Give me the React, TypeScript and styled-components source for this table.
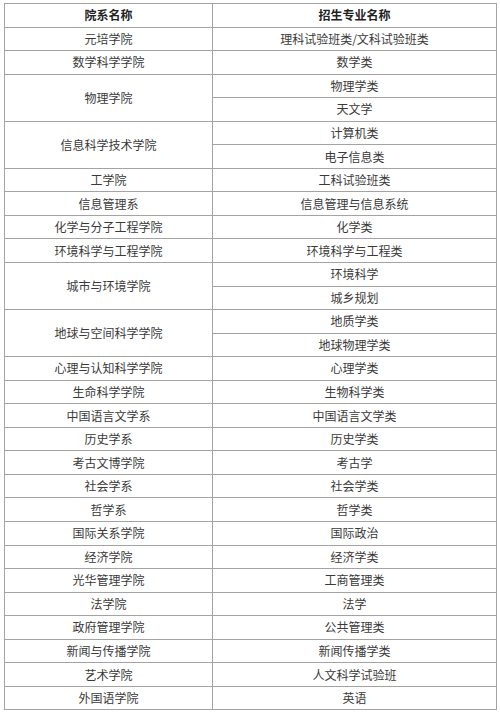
import React from 'react';
import styled, { createGlobalStyle } from 'styled-components';

const GlobalStyle = createGlobalStyle`
  html, body {
    margin: 0;
    padding: 0;
    background: #ffffff;
  }
  body {
    font-family: "Noto Sans CJK SC", "Noto Sans", sans-serif;
    color: #333333;
  }
`;

const Page = styled.div`
  padding: 3px 3px 0 4px;
`;

const Table = styled.table`
  width: 493px;
  border-collapse: collapse;
  table-layout: fixed;
`;

const Row = styled.tr`
  height: 23.55px;
`;

const Cell = styled.td<{ $head?: boolean }>`
  border: 1px solid #a3a3a3;
  padding: 0;
  text-align: center;
  vertical-align: middle;
  font-size: 12px;
  line-height: 14px;
  font-weight: ${(p) => (p.$head ? 700 : 400)};
  color: ${(p) => (p.$head ? '#222222' : '#3a3a3a')};
  white-space: nowrap;
`;

type Dept = { name: string; majors: string[] };

const depts: Dept[] = [
  { name: '元培学院', majors: ['理科试验班类/文科试验班类'] },
  { name: '数学科学学院', majors: ['数学类'] },
  { name: '物理学院', majors: ['物理学类', '天文学'] },
  { name: '信息科学技术学院', majors: ['计算机类', '电子信息类'] },
  { name: '工学院', majors: ['工科试验班类'] },
  { name: '信息管理系', majors: ['信息管理与信息系统'] },
  { name: '化学与分子工程学院', majors: ['化学类'] },
  { name: '环境科学与工程学院', majors: ['环境科学与工程类'] },
  { name: '城市与环境学院', majors: ['环境科学', '城乡规划'] },
  { name: '地球与空间科学学院', majors: ['地质学类', '地球物理学类'] },
  { name: '心理与认知科学学院', majors: ['心理学类'] },
  { name: '生命科学学院', majors: ['生物科学类'] },
  { name: '中国语言文学系', majors: ['中国语言文学类'] },
  { name: '历史学系', majors: ['历史学类'] },
  { name: '考古文博学院', majors: ['考古学'] },
  { name: '社会学系', majors: ['社会学类'] },
  { name: '哲学系', majors: ['哲学类'] },
  { name: '国际关系学院', majors: ['国际政治'] },
  { name: '经济学院', majors: ['经济学类'] },
  { name: '光华管理学院', majors: ['工商管理类'] },
  { name: '法学院', majors: ['法学'] },
  { name: '政府管理学院', majors: ['公共管理类'] },
  { name: '新闻与传播学院', majors: ['新闻传播学类'] },
  { name: '艺术学院', majors: ['人文科学试验班'] },
  { name: '外国语学院', majors: ['英语'] },
];

export default function App() {
  return (
    <>
      <GlobalStyle />
      <Page>
        <Table>
          <colgroup>
            <col style={{ width: 208 }} />
            <col />
          </colgroup>
          <tbody>
            <Row>
              <Cell $head>院系名称</Cell>
              <Cell $head>招生专业名称</Cell>
            </Row>
            {depts.map((d) =>
              d.majors.map((m, i) => (
                <Row key={d.name + m}>
                  {i === 0 && <Cell rowSpan={d.majors.length}>{d.name}</Cell>}
                  <Cell>{m}</Cell>
                </Row>
              ))
            )}
          </tbody>
        </Table>
      </Page>
    </>
  );
}
